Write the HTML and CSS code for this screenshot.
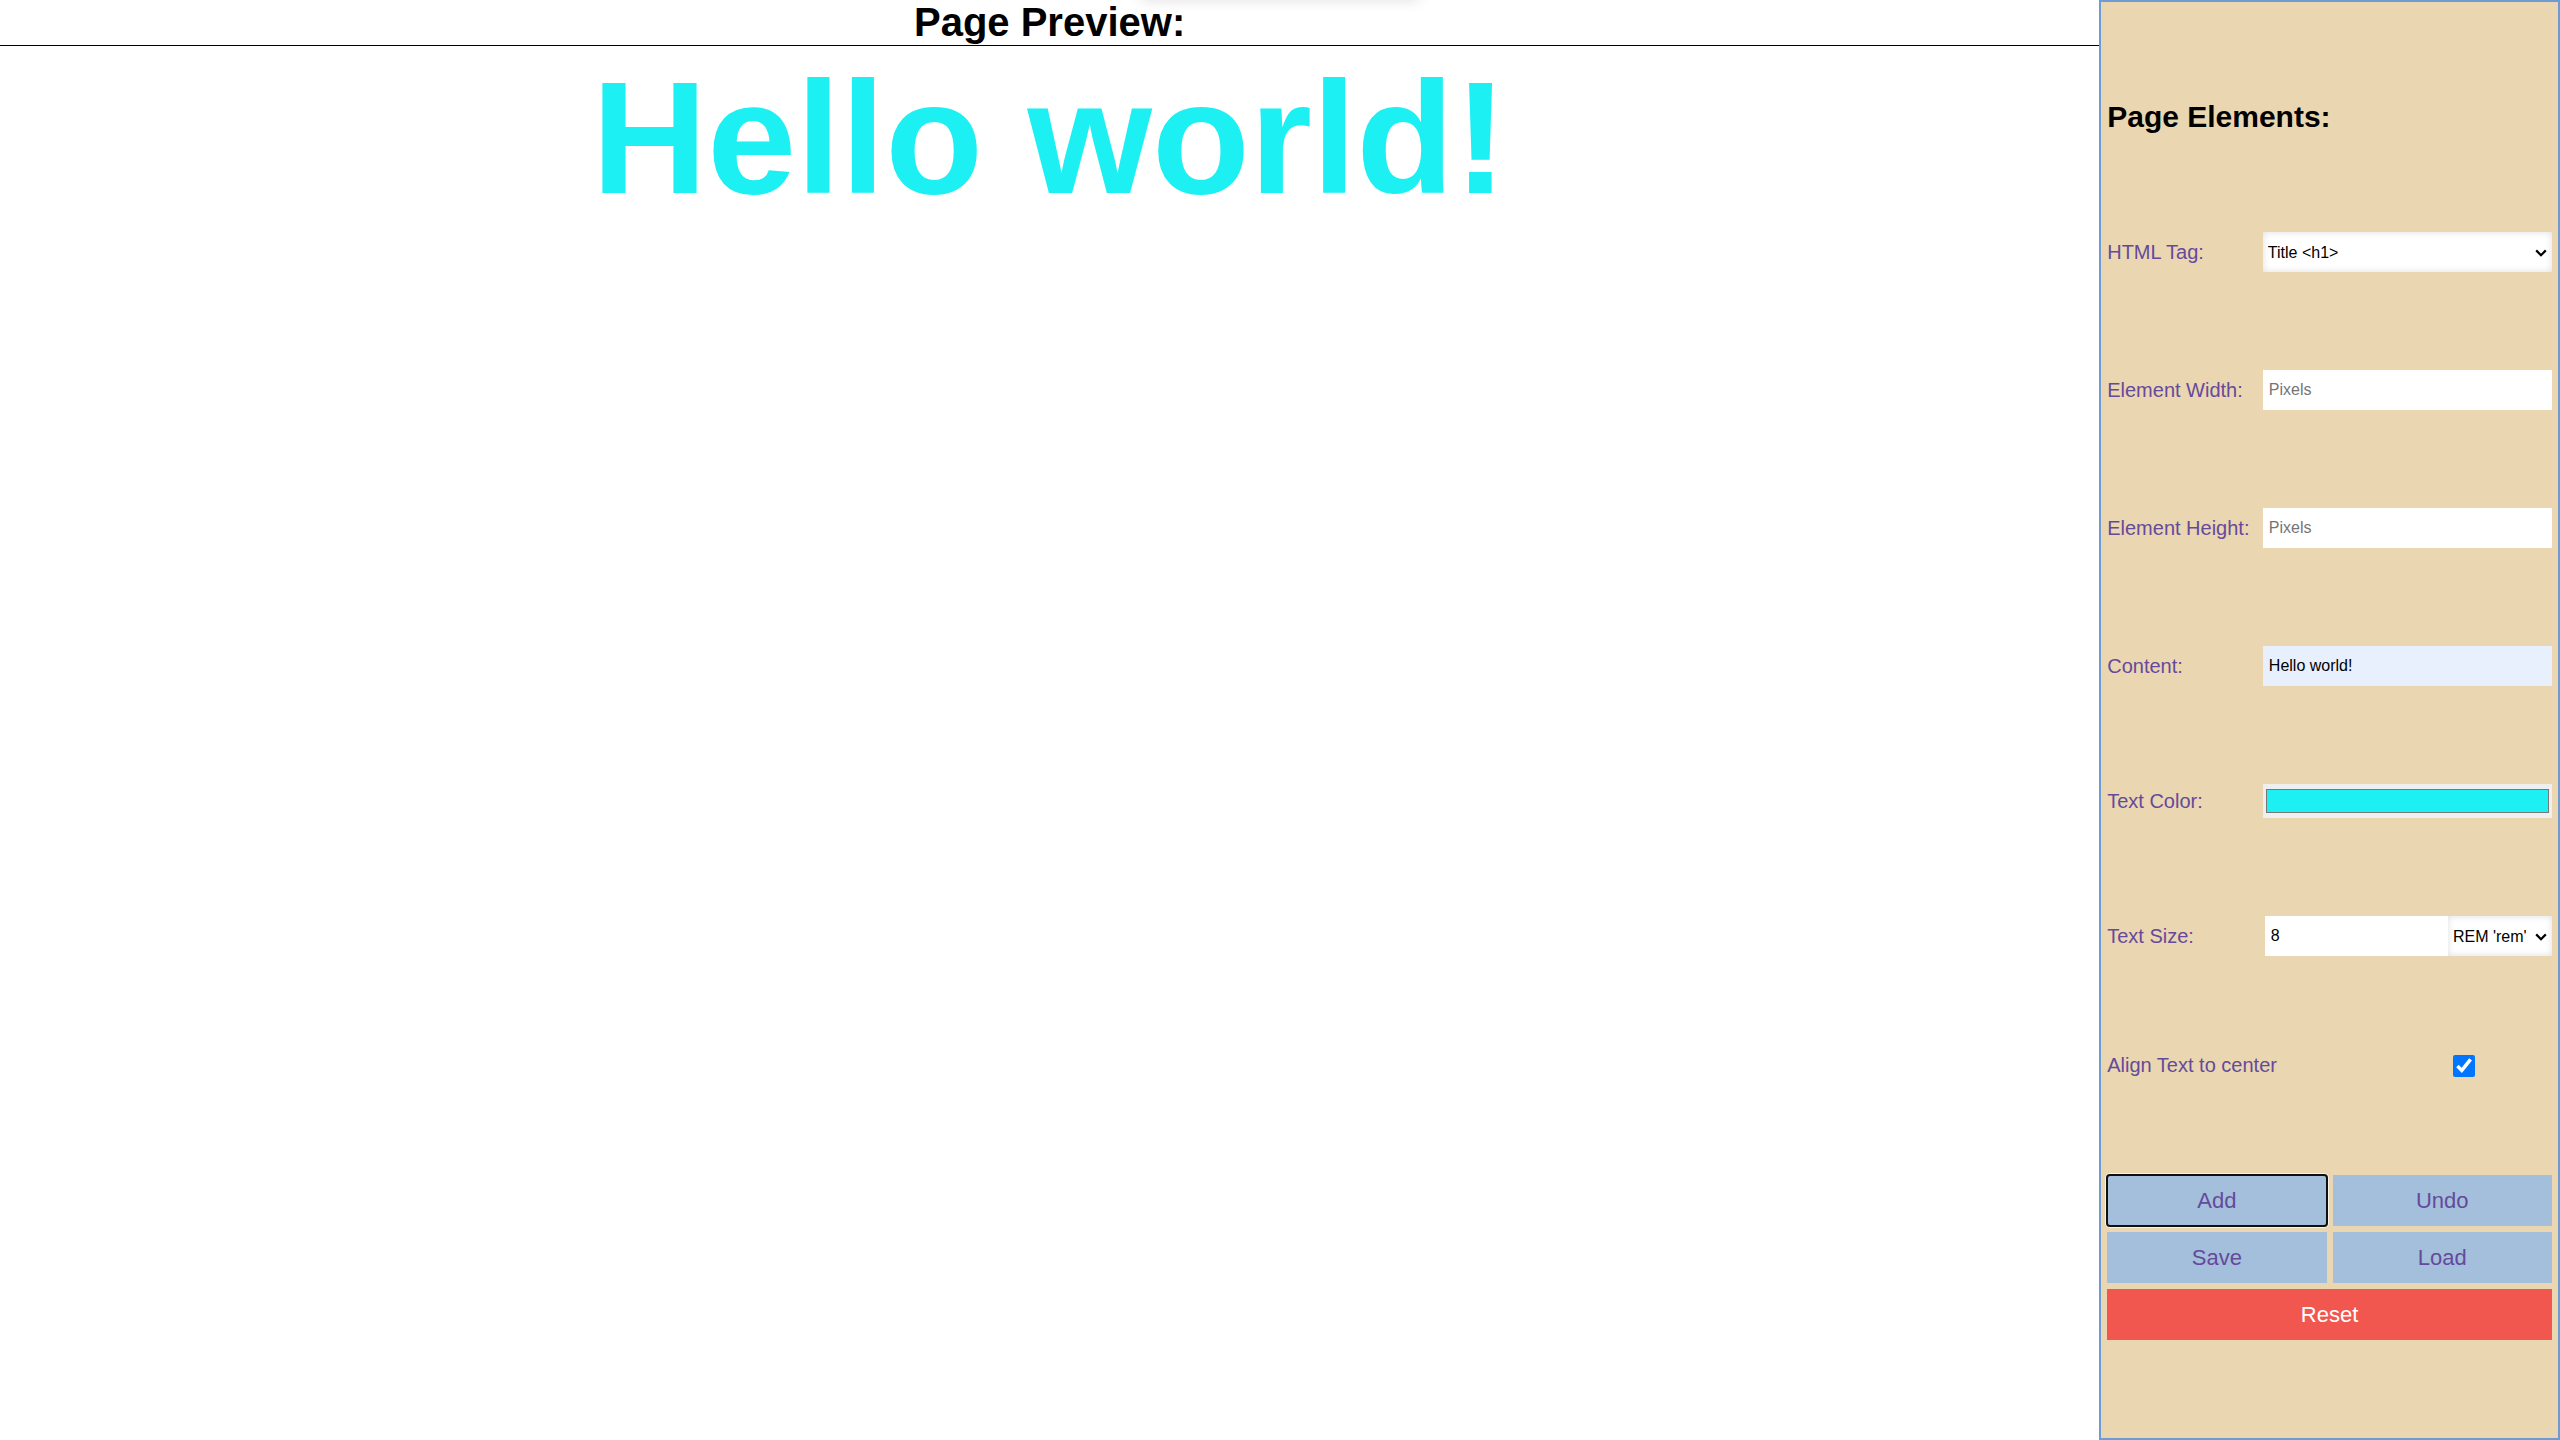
FILE: index.html
```html
<!DOCTYPE html>
<html lang="en">
<head>
<meta charset="utf-8">
<title>Page Builder</title>
<link rel="stylesheet" href="styles.css">
</head>
<body>
<div class="app">
  <main class="preview">
    <div class="toast-shadow"></div>
    <h1 class="preview-title">Page Preview:</h1>
    <h1 class="hello">Hello world!</h1>
  </main>
  <aside class="panel">
    <h2 class="panel-title">Page Elements:</h2>

    <div class="row">
      <label class="label">HTML Tag:</label>
      <div class="control select-wrap">
        <select class="field select"><option>Title &lt;h1&gt;</option></select>
        <svg class="chevron" width="12" height="8" viewBox="0 0 12 8"><path d="M1.2 1.4 L6 6.2 L10.8 1.4" fill="none" stroke="#000" stroke-width="2.2"/></svg>
      </div>
    </div>

    <div class="row">
      <label class="label">Element Width:</label>
      <div class="control"><input class="field" type="text" placeholder="Pixels"></div>
    </div>

    <div class="row">
      <label class="label">Element Height:</label>
      <div class="control"><input class="field" type="text" placeholder="Pixels"></div>
    </div>

    <div class="row">
      <label class="label">Content:</label>
      <div class="control"><input class="field autofill" type="text" value="Hello world!"></div>
    </div>

    <div class="row">
      <label class="label">Text Color:</label>
      <div class="control"><input class="color" type="color" value="#1cf0f2"></div>
    </div>

    <div class="row">
      <label class="label">Text Size:</label>
      <div class="control size-control">
        <input class="field number" type="number" value="8">
        <div class="select-wrap unit-wrap">
          <select class="field select unit"><option>REM 'rem'</option></select>
          <svg class="chevron" width="12" height="8" viewBox="0 0 12 8"><path d="M1.2 1.4 L6 6.2 L10.8 1.4" fill="none" stroke="#000" stroke-width="2.2"/></svg>
        </div>
      </div>
    </div>

    <div class="row">
      <label class="label label-wide">Align Text to center</label>
      <input class="check" type="checkbox" checked>
    </div>

    <div class="buttons">
      <button class="btn focused">Add</button>
      <button class="btn">Undo</button>
      <button class="btn">Save</button>
      <button class="btn">Load</button>
      <button class="btn reset">Reset</button>
    </div>
  </aside>
</div>
</body>
</html>
```

FILE: styles.css
```css
html {
  font-size: 20px;
}

body {
  margin: 0;
  font-family: "Liberation Sans", Arial, sans-serif;
  background: #ffffff;
}

.app {
  display: flex;
  height: 100vh;
}

.preview {
  position: relative;
  width: 82%;
  overflow: hidden;
}

.toast-shadow {
  position: absolute;
  top: -48px;
  left: 1140px;
  width: 280px;
  height: 48px;
  border-radius: 6px;
  background: #fff;
  box-shadow: 0 0 14px rgba(0, 0, 0, 0.13);
}

.preview-title {
  margin: 0;
  font-size: 2rem;
  font-weight: bold;
  text-align: center;
  color: #000;
  border-bottom: 1px solid #000;
}

.hello {
  margin: 0;
  font-size: 8rem;
  font-weight: bold;
  text-align: center;
  color: #1cf0f2;
}

.panel {
  width: 18%;
  box-sizing: border-box;
  border: 2px solid #6f9bd4;
  background: #ead6b1;
  padding: 0 6px;
  display: flex;
  flex-direction: column;
  justify-content: space-evenly;
}

.panel-title {
  margin: 0;
  font-size: 1.5rem;
  font-weight: bold;
  color: #000;
}

.row {
  display: flex;
  align-items: center;
}

.label {
  width: 35%;
  flex: none;
  font-size: 1rem;
  color: #654a9b;
}

.label-wide {
  width: auto;
  flex: 1;
}

.control {
  width: 65%;
  flex: none;
}

.field {
  display: block;
  box-sizing: border-box;
  width: 100%;
  height: 40px;
  border: none;
  outline: none;
  padding: 0 6px;
  margin: 0;
  font-family: "Liberation Sans", Arial, sans-serif;
  font-size: 16px;
  color: #000;
  background: #fff;
}

.field::placeholder {
  color: #757575;
}

.autofill {
  background: #e8f0fe;
}

.select-wrap {
  position: relative;
}

.select {
  -webkit-appearance: none;
  appearance: none;
  padding: 0 24px 0 5px;
  box-shadow: inset 0 0 7px rgba(0, 0, 0, 0.13);
}

.chevron {
  position: absolute;
  right: 5px;
  top: 50%;
  margin-top: -3px;
  pointer-events: none;
}

.color {
  display: block;
  box-sizing: border-box;
  width: 100%;
  height: 34px;
  padding: 1px;
  margin: 0;
  border: none;
  background: #efefef;
  cursor: pointer;
}

.color::-webkit-color-swatch-wrapper {
  padding: 4px 2px;
}

.color::-webkit-color-swatch {
  border: 1px solid #777;
}

.size-control {
  display: flex;
}

.number {
  flex: 1;
  width: auto;
  min-width: 0;
  margin-left: 2px;
}

.number::-webkit-outer-spin-button,
.number::-webkit-inner-spin-button {
  -webkit-appearance: none;
  margin: 0;
}

.unit-wrap {
  width: 104px;
  flex: none;
}

.unit {
  padding-left: 5px;
  padding-right: 18px;
}

.check {
  width: 22px;
  height: 22px;
  margin: 0 77px 0 0;
  flex: none;
}

.buttons {
  display: grid;
  grid-template-columns: 1fr 1fr;
  gap: 6px;
}

.btn {
  position: relative;
  height: 51px;
  border: none;
  margin: 0;
  padding: 0;
  background: #a4bfdb;
  color: #654a9b;
  font-family: "Liberation Sans", Arial, sans-serif;
  font-size: 22px;
  cursor: pointer;
}

.focused::after {
  content: "";
  position: absolute;
  top: -1px;
  left: -1px;
  right: -1px;
  bottom: -1px;
  border: 2px solid #101010;
  border-radius: 4px;
  box-shadow: 0 0 0 1px rgba(255, 255, 255, 0.7);
}

.reset {
  grid-column: span 2;
  background: #f2574f;
  color: #fff;
}
```
